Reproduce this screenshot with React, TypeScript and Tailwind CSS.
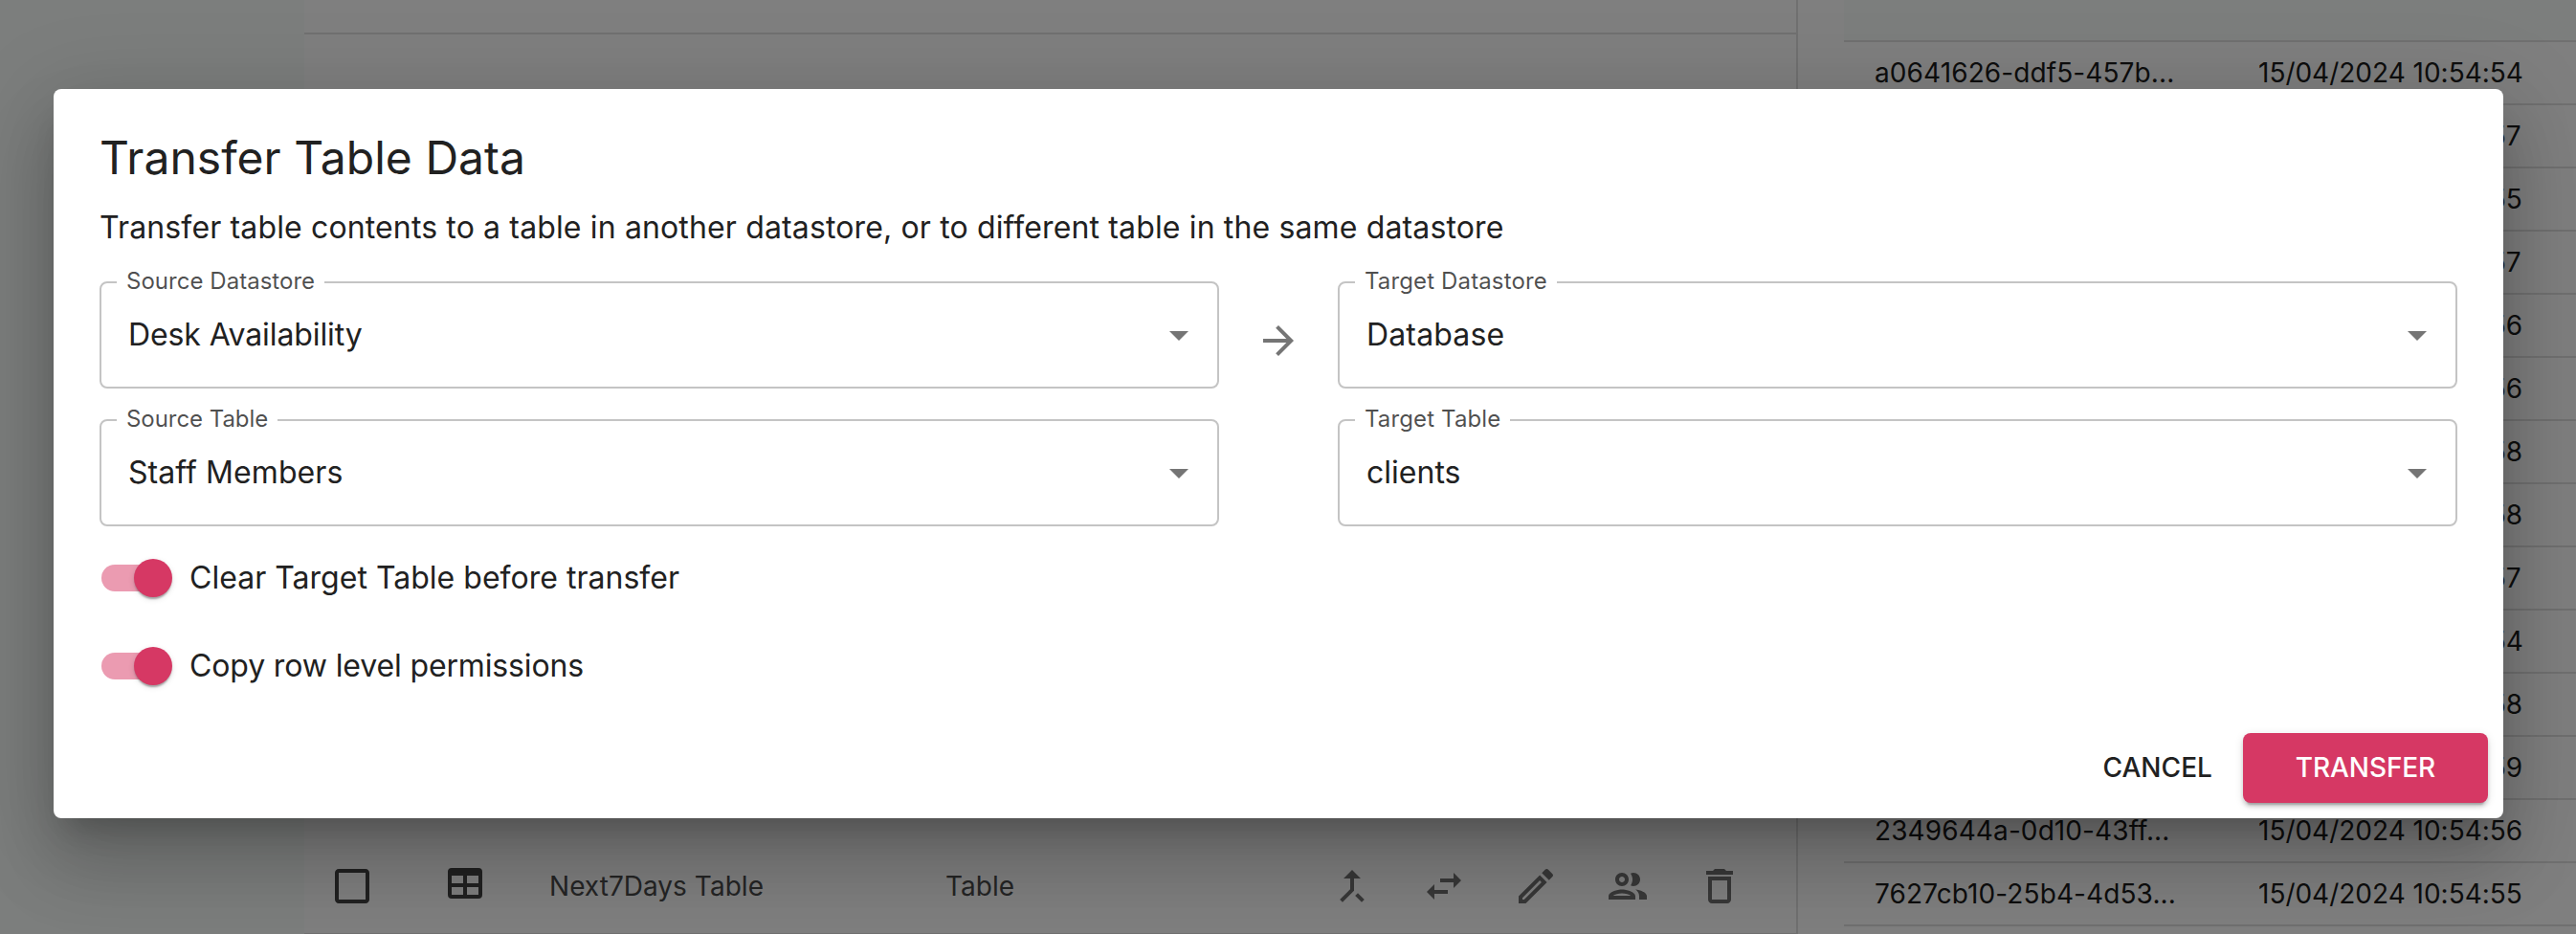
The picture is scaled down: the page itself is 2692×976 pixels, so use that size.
import { MdArrowForward, MdArrowDropDown, MdCallMerge, MdCheckBoxOutlineBlank, MdOutlineEdit, MdOutlineDelete } from "react-icons/md";

type FieldProps = { label: string; value: string; labelClass?: string; valueClass?: string };

function SelectField({ label, value, labelClass = "tracking-[0.13px]", valueClass = "tracking-[0.15px]" }: FieldProps) {
  return (
    <fieldset className="flex h-[120px] min-w-0 flex-1 rounded-[8px] border-2 border-[#c4c4c4] pr-[16px]">
      <legend className={"ml-[16px] px-[10px] pb-[2px] text-[24px] leading-[16px] text-black/70 " + labelClass}>{label}</legend>
      <div className="-mt-[8px] flex flex-1 items-center justify-between pl-[28px]">
        <span className={"text-[32px] leading-[46px] " + valueClass}>{value}</span>
        <MdArrowDropDown className="size-[48px] text-[#757575]" />
      </div>
    </fieldset>
  );
}

function Toggle({ label, labelClass }: { label: string; labelClass: string }) {
  return (
    <label className="ml-[2px] flex h-[76px] items-center">
      <span className="mr-[24px] flex h-[28px] w-[68px] items-center justify-end rounded-full bg-[#eb9bb1]">
        <span className="-mr-[6px] size-[40px] shrink-0 rounded-full bg-[#d63864] shadow-[0_4px_2px_-2px_rgba(0,0,0,0.2),0_2px_2px_0_rgba(0,0,0,0.14),0_2px_6px_0_rgba(0,0,0,0.12)]" />
      </span>
      <span className={"text-[32px] leading-[48px] " + labelClass}>{label}</span>
    </label>
  );
}

const records = [
  ["a0641626-ddf5-457b...", "15/04/2024 10:54:54"],
  ["", "15/04/2024 10:54:57"],
  ["", "15/04/2024 10:54:55"],
  ["", "15/04/2024 10:54:57"],
  ["", "15/04/2024 10:54:56"],
  ["", "15/04/2024 10:54:56"],
  ["", "15/04/2024 10:54:58"],
  ["", "15/04/2024 10:54:58"],
  ["", "15/04/2024 10:54:57"],
  ["", "15/04/2024 10:54:54"],
  ["", "15/04/2024 10:54:58"],
  ["", "15/04/2024 10:54:59"],
  ["2349644a-0d10-43ff...", "15/04/2024 10:54:56"],
  ["7627cb10-25b4-4d53...", "15/04/2024 10:54:55"],
];

export default function App() {
  return (
    <div className="relative h-[976px] w-[2692px] overflow-hidden font-[Inter,sans-serif] text-[#212121]">
      <div className="flex h-full bg-white">
        <aside className="w-[318px] bg-[#f8fcfa]" />
        <main className="flex w-[1561px] flex-col justify-between border-r-2 border-[#e0e0e0]">
          <div className="h-[36px] border-b-2 border-[#e0e0e0]" />
          <div className="flex h-[99px] items-center border-b border-[#e0e0e0] text-[28px] tracking-[0.03px] text-[#4a4a4a]">
            <div className="flex w-[256px] items-center gap-[70px] pl-[26px] text-[#424242]">
              <MdCheckBoxOutlineBlank className="size-[48px]" />
              <svg viewBox="0 0 24 24" className="mb-[6px] size-[48px]" fill="currentColor">
                <path d="M5 4h14a2 2 0 0 1 2 2v12a2 2 0 0 1-2 2H5a2 2 0 0 1-2-2V6a2 2 0 0 1 2-2m0 4v4h6V8H5m8 0v4h6V8h-6m-8 6v4h6v-4H5m8 0v4h6v-4h-6z" />
              </svg>
            </div>
            <div className="w-[414px]">Next7Days Table</div>
            <div className="w-[401px]">Table</div>
            <div className="flex gap-[48px] text-[#707070]">
              <MdCallMerge className="size-[48px]" />
              <svg viewBox="0 0 24 24" className="size-[48px]" fill="currentColor">
                <path d="M6.990 11 3 15l3.990 4v-3H14v-2H6.990zM21 9l-3.990-4v3H10v2h7.010v3z" />
              </svg>
              <MdOutlineEdit className="size-[48px]" />
              <svg viewBox="0 0 24 24" className="size-[48px]" fill="currentColor">
                <path d="M9 13.750c-2.340 0-7 1.170-7 3.500V19h14v-1.750c0-2.330-4.660-3.500-7-3.500zM4.340 17c.84-.58 2.870-1.250 4.660-1.250s3.820.67 4.660 1.250H4.340zM9 12c1.930 0 3.500-1.570 3.500-3.500S10.930 5 9 5 5.500 6.570 5.500 8.500 7.070 12 9 12zm0-5c.83 0 1.500.67 1.500 1.500S9.830 10 9 10s-1.500-.67-1.500-1.500S8.170 7 9 7zm7.040 6.810c1.160.84 1.960 1.960 1.960 3.440V19h4v-1.750c0-2.020-3.500-3.170-5.960-3.440zM15 12c1.930 0 3.500-1.570 3.500-3.500S16.930 5 15 5c-.54 0-1.040.13-1.500.35.63.89 1 1.980 1 3.150s-.37 2.260-1 3.150c.46.22.96.35 1.500.35z" />
              </svg>
              <MdOutlineDelete className="size-[48px]" />
            </div>
          </div>
        </main>
        <section className="ml-[48px] flex-1 text-[28px] tracking-[-0.01px] text-[#1c1c1c]">
          <div className="h-[44px] border-b-2 border-[#e0e0e0] bg-[#f8fcfa]" />
          {records.map(([id, date], i) => (
            <div key={i} className="flex h-[66px] items-center border-b-2 border-[#e0e0e0] pl-[32px]">
              <div className="w-[401px] tracking-[0.1px]">{id}</div>
              <div className="whitespace-nowrap">{date}</div>
            </div>
          ))}
        </section>
      </div>

      <div className="absolute inset-0 bg-black/50 pl-[56px] pt-[93px]">
        <div role="dialog" className="flex h-[762px] w-[2560px] flex-col rounded-[8px] bg-white px-[48px] pt-[40px] shadow-[0_22px_30px_-14px_rgba(0,0,0,0.2),0_48px_76px_6px_rgba(0,0,0,0.14),0_18px_92px_16px_rgba(0,0,0,0.12)]">
          <h1 className="text-[48px] leading-[64px] tracking-[0.04px]">Transfer Table Data</h1>
          <p className="mt-[17px] text-[32px] leading-[48px] tracking-[0.14px]">
            Transfer table contents to a table in another datastore, or to different table in the same datastore
          </p>
          <div className="mt-[24px] flex items-center">
            <SelectField label="Source Datastore" value="Desk Availability" labelClass="tracking-[0.03px]" valueClass="tracking-[-0.1px]" />
            <div className="flex w-[124px] justify-center pt-[20px]">
              <MdArrowForward className="size-[48px] text-[#757575]" />
            </div>
            <SelectField label="Target Datastore" value="Database" />
          </div>
          <div className="mt-[24px] flex gap-[124px]">
            <SelectField label="Source Table" value="Staff Members" labelClass="tracking-[-0.05px]" valueClass="tracking-[0.08px]" />
            <SelectField label="Target Table" value="clients" valueClass="tracking-[0.02px]" />
          </div>
          <div className="mt-[16px] flex flex-col gap-[16px]">
            <Toggle label="Clear Target Table before transfer" labelClass="tracking-[0.02px]" />
            <Toggle label="Copy row level permissions" labelClass="tracking-[-0.13px]" />
          </div>
          <div className="-mr-[32px] mt-[32px] flex items-center justify-end text-[28px] font-medium">
            <button className="pb-[2px] pr-[32px] tracking-[0.05px]">CANCEL</button>
            <button className="h-[73px] w-[256px] rounded-[8px] bg-[#d63864] pb-[2px] tracking-[-0.1px] text-white shadow-[0_6px_2px_-4px_rgba(0,0,0,0.2),0_4px_4px_0_rgba(0,0,0,0.14),0_2px_10px_0_rgba(0,0,0,0.12)]">TRANSFER</button>
          </div>
        </div>
      </div>
    </div>
  );
}
